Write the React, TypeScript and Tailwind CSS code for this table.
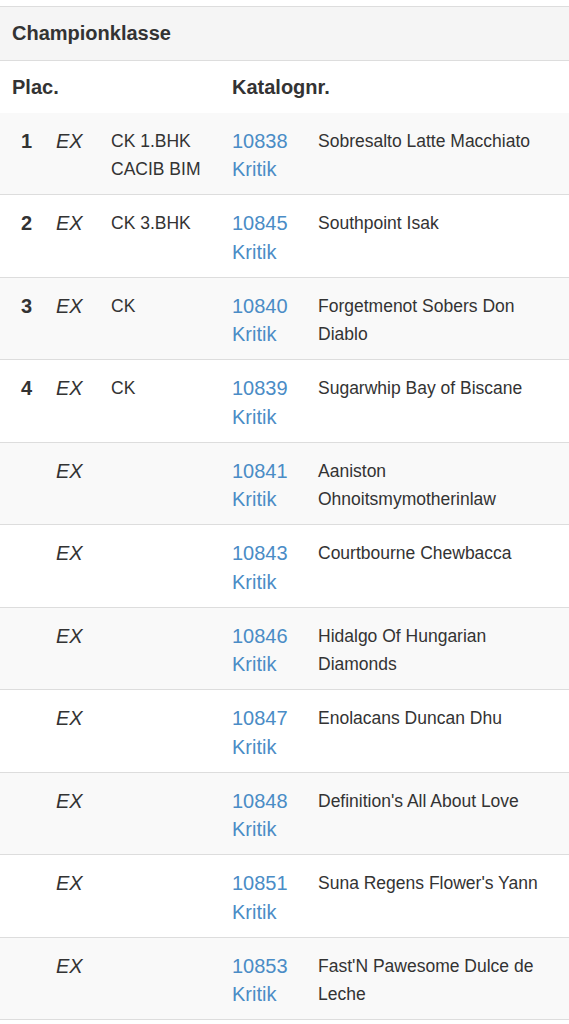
import React from 'react';

interface Entry {
  place?: string;
  grade: string;
  titles: string[];
  catalog: string;
  name: string;
}

const entries: Entry[] = [
  { place: '1', grade: 'EX', titles: ['CK 1.BHK', 'CACIB BIM'], catalog: '10838', name: 'Sobresalto Latte Macchiato' },
  { place: '2', grade: 'EX', titles: ['CK 3.BHK'], catalog: '10845', name: 'Southpoint Isak' },
  { place: '3', grade: 'EX', titles: ['CK'], catalog: '10840', name: 'Forgetmenot Sobers Don Diablo' },
  { place: '4', grade: 'EX', titles: ['CK'], catalog: '10839', name: 'Sugarwhip Bay of Biscane' },
  { grade: 'EX', titles: [], catalog: '10841', name: 'Aaniston Ohnoitsmymotherinlaw' },
  { grade: 'EX', titles: [], catalog: '10843', name: 'Courtbourne Chewbacca' },
  { grade: 'EX', titles: [], catalog: '10846', name: 'Hidalgo Of Hungarian Diamonds' },
  { grade: 'EX', titles: [], catalog: '10847', name: 'Enolacans Duncan Dhu' },
  { grade: 'EX', titles: [], catalog: '10848', name: "Definition's All About Love" },
  { grade: 'EX', titles: [], catalog: '10851', name: "Suna Regens Flower's Yann" },
  { grade: 'EX', titles: [], catalog: '10853', name: "Fast'N Pawesome Dulce de Leche" },
];

export default function App() {
  return (
    <div
      className="w-[569px] min-h-[1024px] bg-white text-[#333] pt-[6px]"
      style={{ fontFamily: '"Liberation Sans", Arial, sans-serif' }}
    >
      {/* Class heading */}
      <div className="border-t border-b border-[#ddd] bg-[#f5f5f5] px-[12px] py-[12px] text-[20px] leading-[28.75px] font-bold">
        Championklasse
      </div>

      {/* Column headings */}
      <div className="grid grid-cols-[220px_1fr] text-[20px] leading-[28.75px] font-bold">
        <div className="pl-[12px] pt-[12.5px] pb-[10.5px]">Plac.</div>
        <div className="pl-[12px] pt-[12.5px] pb-[10.5px]">Katalognr.</div>
      </div>

      {/* Rows */}
      <div>
        {entries.map((e, i) => (
          <div
            key={e.catalog}
            className={`grid grid-cols-[44px_55px_121px_86px_1fr] border-b border-[#ddd] ${
              i % 2 === 0 ? 'bg-[#f9f9f9]' : 'bg-white'
            }`}
          >
            <div className="pl-[21px] pt-[14px] pb-[10px] text-[20px] leading-[28.75px] font-bold">
              {e.place}
            </div>
            <div className="pl-[12px] pt-[14px] pb-[10px] text-[20px] leading-[28.75px] italic">
              {e.grade}
            </div>
            <div className="pl-[12px] pt-[14px] pb-[10px] text-[17.5px] leading-[28.75px]">
              {e.titles.map((t) => (
                <div key={t}>{t}</div>
              ))}
            </div>
            <div className="pl-[12px] pt-[14px] pb-[10px] text-[20px] leading-[28.75px] text-[#4a8cc6]">
              <div>{e.catalog}</div>
              <div>Kritik</div>
            </div>
            <div className="pl-[12px] pr-[12px] pt-[14px] pb-[10px] text-[17.5px] leading-[28.75px]">
              {e.name}
            </div>
          </div>
        ))}
      </div>
    </div>
  );
}
